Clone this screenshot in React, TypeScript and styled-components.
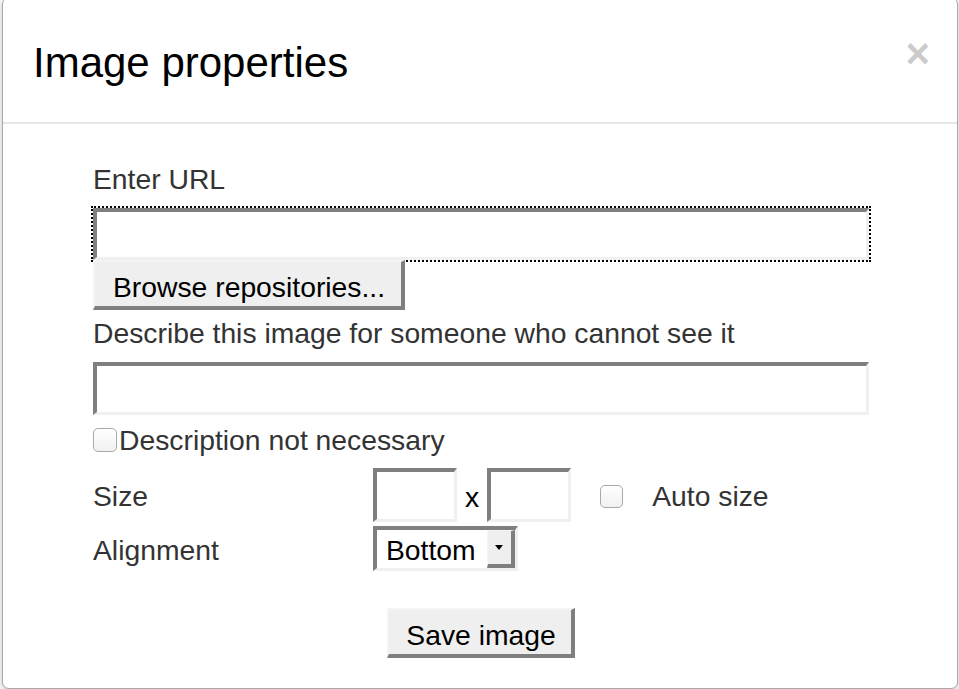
import React from "react";
import styled, { createGlobalStyle } from "styled-components";

const GlobalStyle = createGlobalStyle`
  html, body { margin: 0; padding: 0; background: #fff; overflow: hidden; }
  body { font-family: "Liberation Sans", Arial, Helvetica, sans-serif; }
  * { box-sizing: border-box; }
`;

const FS = "28.3px";

const Modal = styled.div`
  width: 956px;
  height: 692px;
  margin: -3px 0 0 2px;
  background: #fff;
  border: 1px solid #a9a9a9;
  border-radius: 7px;
  box-shadow: 0 2px 6px rgba(0, 0, 0, 0.25);
  overflow: hidden;
`;

const Header = styled.div`
  display: flex;
  align-items: flex-start;
  justify-content: space-between;
  padding: 42px 27px 36px 30px;
  border-bottom: 2px solid #e5e5e5;
`;

const Title = styled.h3`
  margin: 0;
  font-size: 42px;
  font-weight: 400;
  line-height: 46px;
  color: #000;
`;

const Close = styled.button`
  border: 0;
  background: none;
  padding: 0;
  margin-top: -7px;
  font-family: inherit;
  font-size: 42px;
  font-weight: 700;
  line-height: 42px;
  color: #000;
  opacity: 0.2;
  cursor: pointer;
`;

const Body = styled.div`
  padding: 35px 0 0 90px;
`;

const Form = styled.form`
  width: 776px;
  display: flex;
  flex-direction: column;
  align-items: flex-start;
`;

const Label = styled.label<{ $mt?: number }>`
  display: block;
  margin-top: ${(p) => p.$mt ?? 0}px;
  font-size: ${FS};
  line-height: 40px;
  color: #333;
`;

const TextInput = styled.input<{ $mt?: number; $h?: number; $focus?: boolean }>`
  display: block;
  width: 100%;
  height: ${(p) => p.$h ?? 52}px;
  margin: ${(p) => p.$mt ?? 0}px 0 0 0;
  padding: 0 8px;
  font-family: inherit;
  font-size: ${FS};
  background: #fff;
  border-style: solid;
  border-width: 4px 3px 3px 4px;
  border-color: #7f7f7f #f0f0f0 #f0f0f0 #7f7f7f;
  border-radius: 0;
  outline: ${(p) => (p.$focus ? "2px dotted #000" : "none")};
`;

const Button = styled.button<{ $px?: number }>`
  position: relative;
  z-index: 1;
  height: 50px;
  padding: 6px ${(p) => (p.$px ?? 16)}px 0 ${(p) => (p.$px ?? 16) + 2}px;
  font-family: inherit;
  font-size: ${FS};
  line-height: 38px;
  color: #000;
  background: #efefef;
  border-style: solid;
  border-width: 2px 4px 4px 2px;
  border-color: #f4f4f4 #7f7f7f #7f7f7f #f4f4f4;
  border-radius: 0;
  cursor: pointer;
`;

const CheckRow = styled.label`
  display: flex;
  align-items: center;
  margin-top: 5px;
  font-size: ${FS};
  line-height: 40px;
  color: #333;
`;

const CheckText = styled.span`
  margin-left: 2px;
`;

const Check = styled.input<{ $size?: number }>`
  appearance: none;
  -webkit-appearance: none;
  width: ${(p) => p.$size ?? 24}px;
  height: ${(p) => p.$size ?? 24}px;
  margin: 0;
  border: 1px solid #a8a8a8;
  border-radius: 5px;
  background: linear-gradient(#ffffff, #f1f1f1);
  flex: none;
`;

const PropGrid = styled.div`
  display: grid;
  grid-template-columns: 280px auto;
  row-gap: 4px;
  align-items: center;
  margin-top: 8px;
  font-size: ${FS};
  line-height: 40px;
  color: #333;
`;

const RowLabel = styled.span`
  padding-top: 2px;
`;

const Inline = styled.div`
  display: flex;
  align-items: center;
`;

const SizeInput = styled.input`
  width: 84px;
  height: 54px;
  margin: 0;
  padding: 0 6px;
  font-family: inherit;
  font-size: ${FS};
  background: #fff;
  border-style: solid;
  border-width: 4px 3px 3px 4px;
  border-color: #7f7f7f #f0f0f0 #f0f0f0 #7f7f7f;
  border-radius: 0;
  outline: none;
`;

const Times = styled.span`
  margin: 3px 8px 0;
  color: #000;
`;

const AutoCheck = styled(Check)`
  margin: 2px 29px 0 29px;
`;

const AutoLabel = styled.span`
  padding-top: 2px;
  color: #333;
`;

const Select = styled.div`
  display: flex;
  width: 145px;
  height: 45px;
  background: #fff;
  border-style: solid;
  border-width: 4px 3px 3px 4px;
  border-color: #7f7f7f #f0f0f0 #f0f0f0 #7f7f7f;
`;

const SelectValue = styled.span`
  flex: 1;
  padding: 2px 0 0 9px;
  font-size: ${FS};
  line-height: 36px;
  color: #000;
`;

const SelectArrow = styled.span`
  display: flex;
  align-items: center;
  justify-content: center;
  width: 28px;
  padding-right: 2px;
  background: #efefef;
  border-style: solid;
  border-width: 1px 4px 4px 1px;
  border-color: #f6f6f6 #7f7f7f #7f7f7f #f6f6f6;

  &::after {
    content: "";
    width: 0;
    height: 0;
    border-left: 4px solid transparent;
    border-right: 4px solid transparent;
    border-top: 5px solid #000;
  }
`;

const Footer = styled.div`
  align-self: stretch;
  display: flex;
  justify-content: center;
  margin-top: 37px;
`;

export default function App() {
  return (
    <>
      <GlobalStyle />
      <Modal>
        <Header>
          <Title>Image properties</Title>
          <Close aria-label="Close">×</Close>
        </Header>
        <Body>
          <Form onSubmit={(e) => e.preventDefault()}>
            <Label htmlFor="url">Enter URL</Label>
            <TextInput id="url" $mt={9} $h={52} $focus />
            <Button type="button">Browse repositories...</Button>
            <Label htmlFor="alt" $mt={3}>
              Describe this image for someone who cannot see it
            </Label>
            <TextInput id="alt" $mt={9} $h={53} />
            <CheckRow>
              <Check type="checkbox" />
              <CheckText>Description not necessary</CheckText>
            </CheckRow>
            <PropGrid>
              <RowLabel>Size</RowLabel>
              <Inline>
                <SizeInput />
                <Times>x</Times>
                <SizeInput />
                <AutoCheck type="checkbox" $size={23} />
                <AutoLabel>Auto size</AutoLabel>
              </Inline>
              <RowLabel>Alignment</RowLabel>
              <Inline>
                <Select>
                  <SelectValue>Bottom</SelectValue>
                  <SelectArrow />
                </Select>
              </Inline>
            </PropGrid>
            <Footer>
              <Button type="submit" $px={15}>
                Save image
              </Button>
            </Footer>
          </Form>
        </Body>
      </Modal>
    </>
  );
}
